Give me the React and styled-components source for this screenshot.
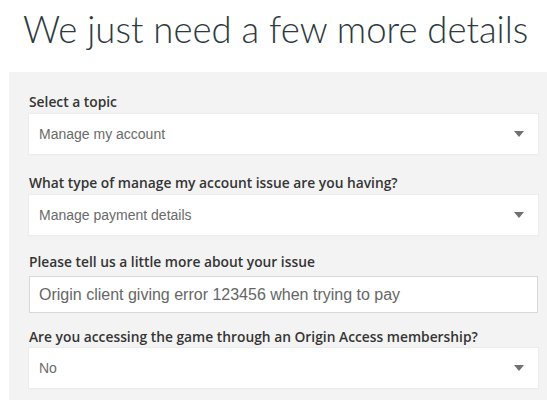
import React from 'react';
import styled, { createGlobalStyle } from 'styled-components';

const GlobalStyle = createGlobalStyle`
  html, body {
    margin: 0;
    padding: 0;
    background: #fff;
    overflow: hidden;
  }
  * {
    box-sizing: border-box;
  }
`;

const Page = styled.div`
  width: 547px;
  height: 400px;
  overflow: hidden;
  padding-left: 9px;
`;

const Title = styled.h1`
  margin: 8px 0 21px 14px;
  font-family: Lato, 'Open Sans', sans-serif;
  font-weight: 300;
  font-size: 36.5px;
  line-height: 43px;
  color: #2d3a41;
  white-space: nowrap;
`;

const Panel = styled.div`
  width: 549px;
  background: #f3f3f3;
  padding: 21px 20px 20px 20px;
  display: flex;
  flex-direction: column;
  gap: 18px;
`;

const Field = styled.div`
  display: flex;
  flex-direction: column;
  margin-top: ${({ shift }) => shift || 0}px;
`;

const Label = styled.label`
  display: block;
  font-family: 'Open Sans', sans-serif;
  font-weight: 600;
  font-size: 13.8px;
  line-height: 18px;
  color: #353535;
  margin-bottom: ${({ space }) => space || 3}px;
  white-space: nowrap;
`;

const SelectBox = styled.div`
  height: 40px;
  background: #fff;
  display: flex;
  align-items: center;
  justify-content: space-between;
  padding: 0 14px 0 10px;
  box-shadow: 0 0 0 1px #ececec, 0 1px 1px rgba(0, 0, 0, 0.06);
  font-family: 'Liberation Sans', Arial, sans-serif;
  font-size: 14px;
  color: #6a6a6a;
`;

const TextInput = styled.input`
  height: 37px;
  width: 100%;
  background: #fff;
  border: 1px solid #d8d8d8;
  padding: 0 9px;
  font-family: 'Liberation Sans', Arial, sans-serif;
  font-size: 16px;
  color: #666;
  outline: none;
`;

const Arrow = () => (
  <svg width="10" height="6" viewBox="0 0 10 6">
    <path d="M0 0 L10 0 L5 6 Z" fill="#707070" />
  </svg>
);

const Select = ({ value }) => (
  <SelectBox>
    <span>{value}</span>
    <Arrow />
  </SelectBox>
);

export default function App() {
  return (
    <Page>
      <GlobalStyle />
      <Title>We just need a few more details</Title>
      <Panel>
        <Field>
          <Label>Select a topic</Label>
          <Select value="Manage my account" />
        </Field>
        <Field shift={2}>
          <Label>What type of manage my account issue are you having?</Label>
          <Select value="Manage payment details" />
        </Field>
        <Field>
          <Label space={5}>Please tell us a little more about your issue</Label>
          <TextInput defaultValue="Origin client giving error 123456 when trying to pay" />
        </Field>
        <Field shift={-3}>
          <Label space={2}>Are you accessing the game through an Origin Access membership?</Label>
          <Select value="No" />
        </Field>
      </Panel>
    </Page>
  );
}
